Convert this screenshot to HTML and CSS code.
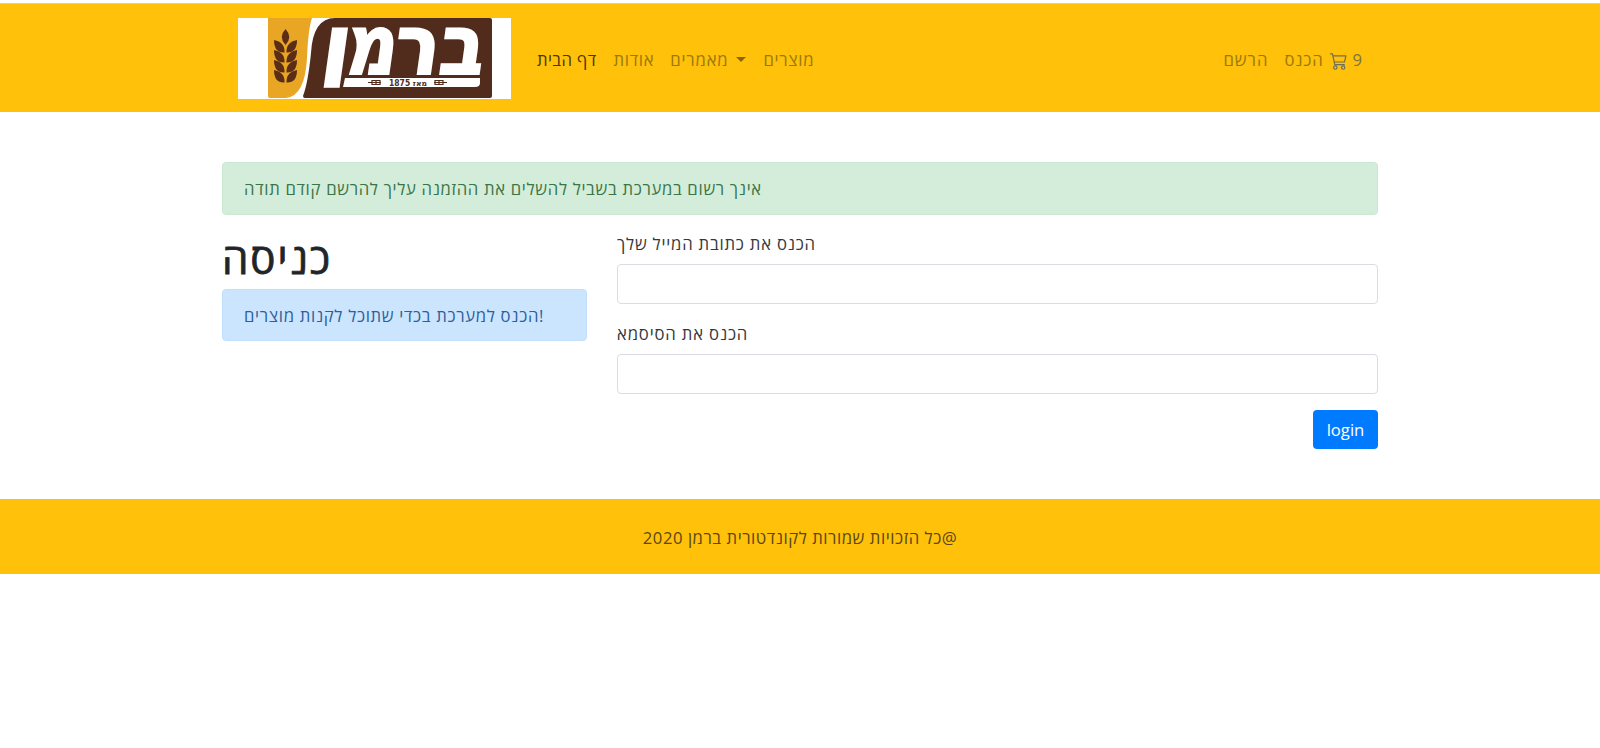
FILE: index.html
```html
<!DOCTYPE html>
<html lang="he">
<head>
<meta charset="utf-8">
<title>כניסה</title>
<link rel="stylesheet" href="styles.css">
</head>
<body>
<nav class="navbar">
  <div class="container nav-inner">
    <a class="brand">
      <svg class="logo" viewBox="0 0 273 81" preserveAspectRatio="none">
        <rect width="273" height="81" fill="#fff"/>
        <path d="M30 0H74Q70 12 69 40Q67 78 48 80H32Q30 80 30 78Z" fill="#e9a625"/>
        <path d="M65 78Q70 65 73 35Q75 0 97 0H252Q254 0 254 2V78Q254 80 252 80H67Q65 80 65 78Z" fill="#512b1c"/>
        <g fill="#5b2d17">
          <path d="M47.500 11Q55 19 47.500 27Q40 19 47.500 11Z"/>
          <path id="grain-l" d="M36 22Q47 24 46.500 34.500Q36 35 36 22Z"/>
          <path id="grain-r" d="M59 22Q48 24 48.500 34.500Q59 35 59 22Z"/>
          <use href="#grain-l" y="10"/><use href="#grain-r" y="10"/>
          <use href="#grain-l" y="20"/><use href="#grain-r" y="20"/>
          <use href="#grain-l" y="30"/><use href="#grain-r" y="30"/>
        </g>
        <path d="M107 60H242V65Q242 69 237 69H105Z" fill="#fff"/>
        <g class="logo-name" transform="translate(0 56) skewX(-8)">
          <text x="199" y="0" textLength="45" lengthAdjust="spacingAndGlyphs">ב</text>
          <text x="153" y="0" textLength="46" lengthAdjust="spacingAndGlyphs">ר</text>
          <text x="106" y="0" textLength="51" lengthAdjust="spacingAndGlyphs">מ</text>
          <text class="logo-nun" x="81" y="-5" textLength="29" lengthAdjust="spacingAndGlyphs">ן</text>
        </g>
        <text class="logo-year" x="151" y="67.500" textLength="38" lengthAdjust="spacingAndGlyphs">&#x202D;1875 &#x202E;מאז&#x202C;&#x202C;</text>
        <g fill="none" stroke="#512b1c" stroke-width="1.200">
          <path d="M130 64.500H143M196 64.500H209"/>
          <path d="M134 62.500H142V66.500H134ZM138 62V67M197 62.500H205V66.500H197ZM201 62V67"/>
        </g>
      </svg>
    </a>
    <div class="links">
      <a class="link active w-home">דף הבית</a>
      <a class="link w-about">אודות</a>
      <a class="link w-articles">מאמרים</a>
      <i class="caret"></i>
      <a class="link w-products">מוצרים</a>
    </div>
    <div class="links account">
      <a class="link w-register">הרשם</a>
      <a class="link w-enter">הכנס</a>
      <svg class="cart" viewBox="0 0 16 16" fill="none" stroke="currentColor" stroke-width="1.100" stroke-linejoin="round" stroke-linecap="round"><path d="M.5.800H2.300L4.500 11H13.500M2.800 2.700H15L13.600 8.500H4"/><circle cx="5" cy="13.700" r="1.600"/><circle cx="12.400" cy="13.700" r="1.600"/></svg>
      <span class="count">9</span>
    </div>
  </div>
</nav>
<main class="container main">
  <div class="alert success"><span class="t-success">אינך רשום במערכת בשביל להשלים את ההזמנה עליך להרשם קודם תודה</span></div>
  <div class="row">
    <section class="intro">
      <h1>כניסה</h1>
      <div class="alert info"><span class="t-info">&#x202B;הכנס למערכת בכדי שתוכל לקנות מוצרים&#x202C;!</span></div>
    </section>
    <form class="form">
      <label for="email"><span class="t-email">הכנס את כתובת המייל שלך</span></label>
      <input id="email" type="text">
      <label for="password"><span class="t-password">הכנס את הסיסמא</span></label>
      <input id="password" type="password">
      <button class="login" type="button">login</button>
    </form>
  </div>
</main>
<footer class="footer"><span class="t-footer" dir="rtl">@כל הזכויות שמורות לקונדטורית ברמן 2020</span></footer>
</body>
</html>
```
FILE: styles.css
```css
* { box-sizing: border-box; }
body {
  margin: 0;
  background: #fff;
  color: #34383c;
  font: 16.67px/25px "Open Sans", "Noto Sans", sans-serif;
}
.navbar {
  height: 109px;
  margin-top: 3px;
  border-top: 1px solid #d8d2bc;
  background: #ffc10a;
}
.container { width: 1156px; margin: 0 auto; }
.nav-inner { height: 108px; display: flex; align-items: flex-start; padding: 14px 16px 0; }
.brand { width: 273px; height: 81px; }
.logo { display: block; width: 273px; height: 81px; overflow: visible; }
.logo-name { font: 900 83px "DejaVu Sans", sans-serif; fill: #fff; stroke: #fff; stroke-width: 2px; }
.logo-nun { font-size: 74px; }
.logo-year { font: bold 8px "DejaVu Sans", sans-serif; fill: #512b1c; }
.links { display: flex; align-items: center; height: 25px; margin: 29px 0 0 26px; white-space: nowrap; }
.account { margin-left: auto; }
.link { color: #9a7810; margin-right: 16px; letter-spacing: .7px; }
.link.active { color: #49370d; letter-spacing: .4px; margin-right: 17px; }
.link.w-articles { margin-right: 8px; letter-spacing: .85px; }
.link.w-enter { margin-right: 7px; letter-spacing: .85px; }
.link.w-register { letter-spacing: 1px; }
.link.w-products { margin-right: 0; }
.caret { border: 5px solid transparent; border-top-color: #8b6508; border-bottom: 0; margin-right: 17px; }
.cart { width: 17px; height: 17px; color: #6c6d55; margin: 3px 5px 0 0; }
.count { color: #7e7440; }
.main { padding-top: 50px; height: 387px; }
.alert { height: 53px; padding: 13px 21px; border: 1px solid; border-radius: 4px; white-space: nowrap; }
.success { color: #3a7547; background: #d4edda; border-color: #c9e9d1; }
.info { height: 52px; color: #2d5f98; background: #cce5ff; border-color: #c1dffc; }
.t-success { letter-spacing: .69px; }
.t-info { letter-spacing: .69px; }
.t-email { letter-spacing: .8px; }
.t-password { letter-spacing: .85px; }
.t-footer { letter-spacing: .55px; padding-top: 2px; }
.row { display: flex; gap: 30px; margin-top: 16px; }
.intro { flex: 1; }
h1 { margin: 0 0 8px; height: 50px; color: #212529; font-size: 42px; line-height: 53px; font-weight: 500; letter-spacing: 2px; -webkit-text-stroke: .8px #212529; }
.form { width: 761px; display: flex; flex-direction: column; flex: none; }
.form label { height: 25px; margin-bottom: 8px; }
.form input { height: 40px; border: 1px solid #d9dde1; border-radius: 4px; margin: 0 0 16.500px; padding: 0 12px; font: inherit; }
.login { align-self: flex-end; width: 65px; height: 39px; border: 0; border-radius: 4px; background: #007bff; color: #fff; font: inherit; padding: 0; }
.footer { height: 75px; background: #ffc10a; display: flex; align-items: center; justify-content: center; color: #5a4716; }
```
